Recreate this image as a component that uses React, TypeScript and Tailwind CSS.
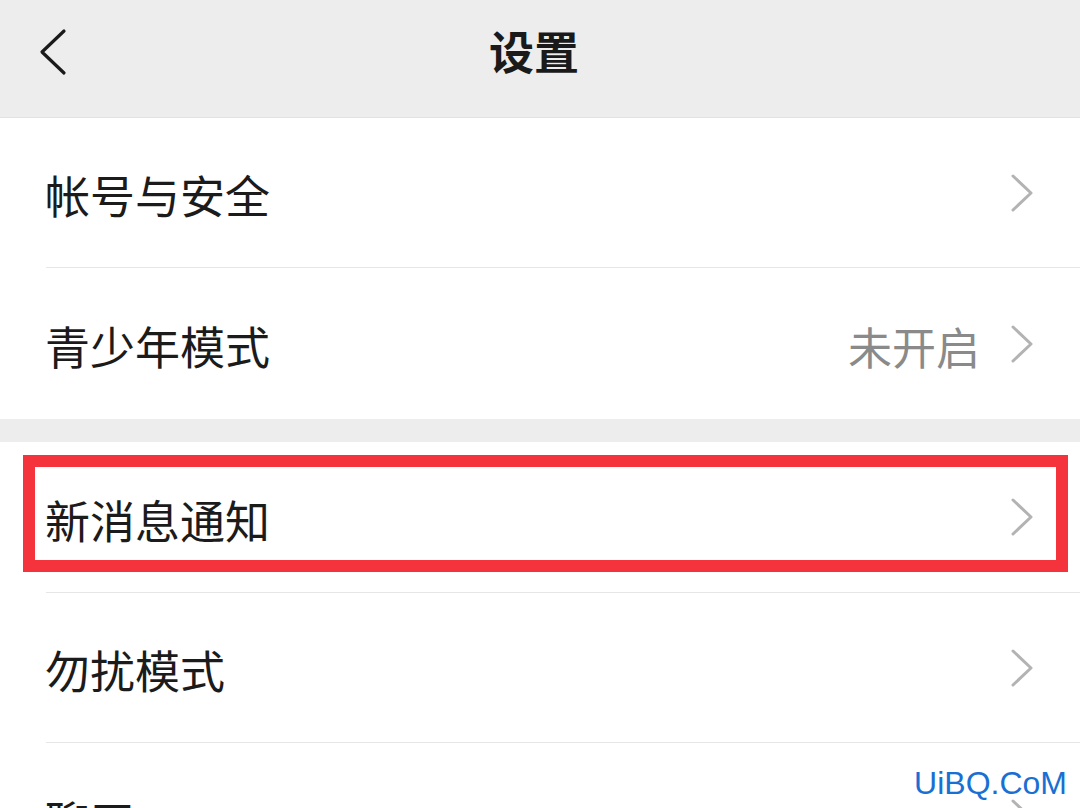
import { ReactNode } from "react";

const cjk = "font-['Noto_Sans_CJK_SC','Noto_Sans',sans-serif]";

function Chevron() {
    return (
        <svg width="24" height="38" viewBox="0 0 24 38" fill="none" className="shrink-0">
            <polyline points="3,2 21,19 3,36" stroke="#b3b3b3" strokeWidth="3" strokeLinecap="round" strokeLinejoin="round" />
        </svg>
    );
}

function Row({ label, value, last, height = "h-[150px]" }: { label: string; value?: string; last?: boolean; height?: string }) {
    return (
        <div className="pl-[46px] bg-white">
            <div className={`${height} flex items-center justify-between pr-[46px] ${last ? "" : "border-b border-[#e6e6e6]"}`}>
                <span className="text-[45px] leading-none text-[#1b1b1b] pt-[4px] -ml-[1px]">{label}</span>
                <div className="flex items-center gap-[30px]">
                    {value && <span className="text-[44px] leading-none text-[#8a8a8a] pt-[4px]">{value}</span>}
                    <Chevron />
                </div>
            </div>
        </div>
    );
}

function Highlight({ children }: { children: ReactNode }) {
    return (
        <div className="relative">
            {children}
            <div className="absolute left-[23px] right-[12px] top-[13px] h-[117px] border-[12px] border-[#f5333d] pointer-events-none" />
        </div>
    );
}

export default function App() {
    return (
        <div className={`w-[1080px] h-[808px] overflow-hidden bg-white relative ${cjk}`}>
            <header className="h-[118px] bg-[#ededed] border-b border-[#e2e2e2] grid grid-cols-[1fr_auto_1fr] items-center">
                <div className="pl-[38px] pb-[12px]">
                    <svg width="30" height="50" viewBox="0 0 30 50" fill="none">
                        <polyline points="26,3 4,24 26,45" stroke="#1a1a1a" strokeWidth="3.2" strokeLinecap="round" strokeLinejoin="round" />
                    </svg>
                </div>
                <h1 className="text-[45px] leading-none font-semibold text-[#1a1a1a] pb-[16px] pr-[12px]">设置</h1>
                <div />
            </header>

            <Row label="帐号与安全" height="h-[150px]" />
            <Row label="青少年模式" value="未开启" last height="h-[151px]" />

            <div className="h-[23px] bg-[#ededed]" />

            <Highlight>
                <Row label="新消息通知" height="h-[151px]" />
            </Highlight>
            <Row label="勿扰模式" height="h-[150px]" />
            <Row label="聊天" last height="h-[150px]" />

            <div className="absolute right-[11px] top-[767px] text-[32px] leading-none text-[#1a6fd3] font-['Liberation_Sans',sans-serif] bg-white/90 px-[2px]">
                UiBQ.CoM
            </div>
        </div>
    );
}
